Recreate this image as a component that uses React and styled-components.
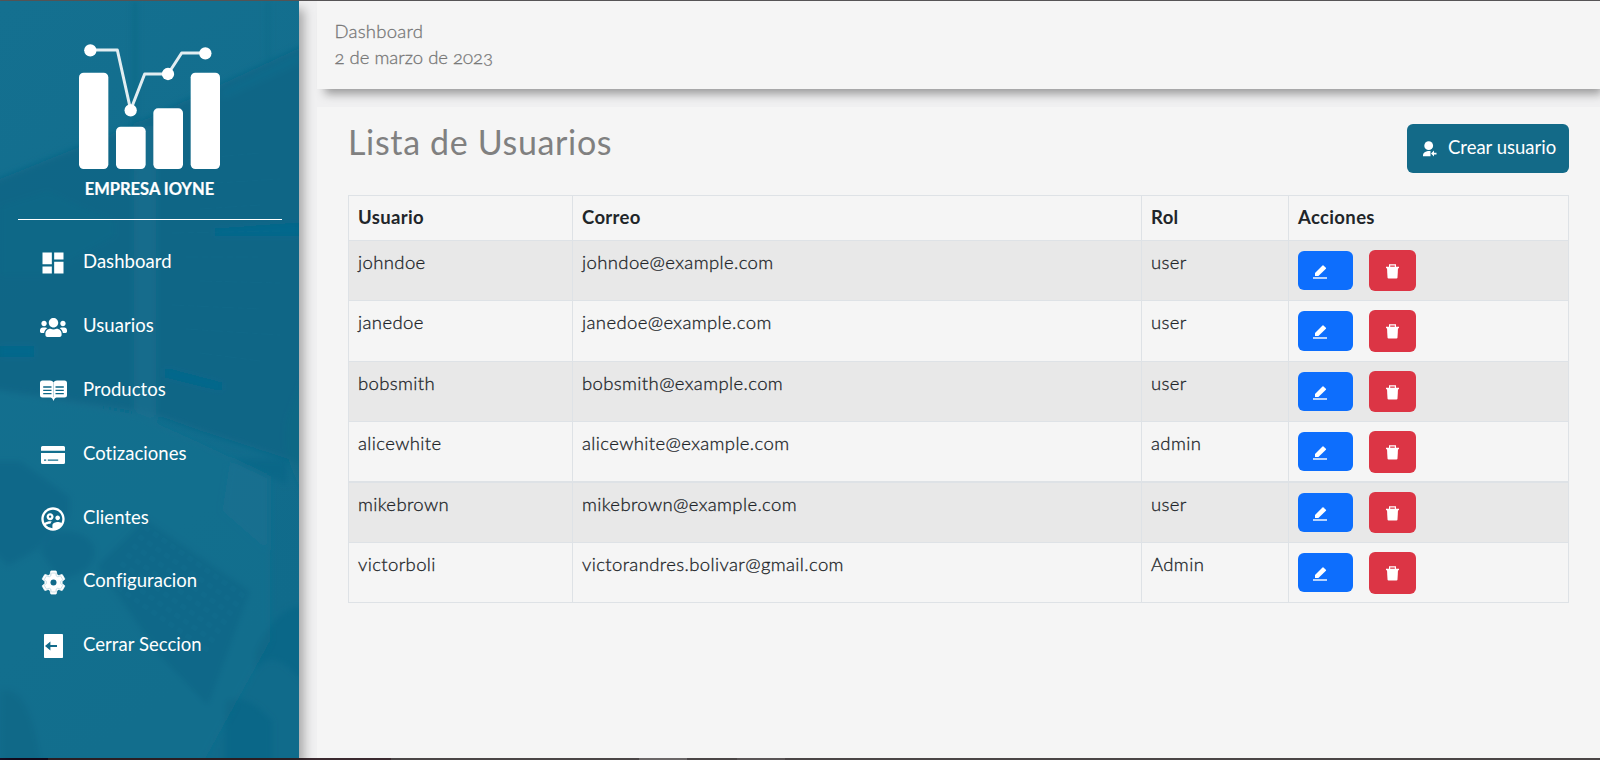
import React from 'react';
import styled, { createGlobalStyle } from 'styled-components';
import { MdDashboard, MdOutlineSupervisedUserCircle } from 'react-icons/md';
import { FaUsers } from 'react-icons/fa';

const GlobalStyle = createGlobalStyle`
  * { box-sizing: border-box; }
  body {
    margin: 0;
    background: #f5f5f5;
    color: #212529;
    font-family: Lato, 'Liberation Sans', sans-serif;
    font-size: 18.5px;
    line-height: 27px;
    overflow: hidden;
  }
`;

const Page = styled.div`
  display: flex;
  width: 1600px;
  height: 757px;
`;
const TopEdge = styled.div`
  height: 1px;
  background: #565456;
`;
const BottomEdge = styled.div`
  height: 2px;
  background: linear-gradient(90deg, #180f26 48px, #3b2a30 48px, #3b2a30 391px, #4a4546 391px,
    #4a4546 639px, #6a6667 639px, #6a6667 687px, #4a4546 687px, #4a4546 737px, #5a5556 737px,
    #5a5556 785px, #4a4546 785px);
`;

const Sidebar = styled.aside`
  position: relative;
  flex: none;
  width: 299px;
  background: #0f6a8a;
  box-shadow: 5px 8px 10px rgba(0, 0, 0, 0.3);
  z-index: 2;
`;
const Backdrop = styled.svg`
  position: absolute;
  inset: 0;
  width: 299px;
  height: 757px;
`;
const SidebarBody = styled.div`
  position: relative;
  padding: 43px 17px 0 18px;
`;
const Brand = styled.div`
  display: flex;
  flex-direction: column;
  align-items: center;
  height: 176px;
  padding-right: 2px;
  border-bottom: 1px solid #fff;
`;
const BrandName = styled.div`
  margin-top: 6px;
  padding-left: 1px;
  color: #fff;
  font-size: 16.5px;
  font-weight: 700;
  -webkit-text-stroke: 0.2px currentColor;
`;
const Nav = styled.nav`
  padding-top: 10px;
`;
const NavItem = styled.a`
  display: flex;
  align-items: center;
  height: 63.8px;
  padding-left: 20.5px;
  color: #fff;
  letter-spacing: 0.05px;
`;
const NavIcon = styled.span`
  display: flex;
  justify-content: center;
  align-items: center;
  width: 29px;
  height: 30px;
  margin: 3px 15.5px 0 0;
`;

const Main = styled.main`
  flex: 1;
  display: flex;
  flex-direction: column;
  gap: 18px;
  padding-left: 18px;
  background: #f0f0f1;
`;
const TopBar = styled.header`
  height: 88px;
  padding: 17px 17.5px;
  background: #f5f5f5;
  color: #777;
  font-weight: 300;
  line-height: 26px;
  box-shadow: 5px 8px 9px -3px rgba(0, 0, 0, 0.36);
`;
const Crumb = styled.div`
  letter-spacing: ${(p) => p.$spacing};
  font-variant-numeric: oldstyle-nums;
  -webkit-text-stroke: 0.3px currentColor;
`;
const Content = styled.section`
  flex: 1;
  padding: 17px 31px 0;
  background: #f5f5f5;
`;
const TitleRow = styled.div`
  display: flex;
  justify-content: space-between;
  height: 71px;
`;
const Title = styled.h1`
  margin: 0;
  color: #808080;
  font-size: 34px;
  font-weight: 400;
  line-height: 36px;
  letter-spacing: 0.65px;
`;
const CreateButton = styled.button`
  display: flex;
  align-items: center;
  width: 162px;
  height: 49px;
  padding: 0 0 2px 16px;
  border: 0;
  border-radius: 6px;
  background: #136a88;
  color: #fff;
  font: inherit;
  svg { margin: 3px 11px 0 0; }
`;

const Table = styled.div`
  border: solid #dee2e6;
  border-width: 1px 0 0 1px;
`;
const Row = styled.div`
  display: grid;
  grid-template-columns: 224px 569px 147px 1fr;
  height: ${(p) => p.$height}px;
  background: ${(p) => (p.$striped ? '#e8e8e8' : '#f5f5f5')};
`;
const Cell = styled.div`
  padding: 8px 9px 0;
  border: solid #dee2e6;
  border-width: 0 1px ${(p) => (p.$thick ? 2 : 1)}px 0;
  font-weight: ${(p) => (p.$head ? 700 : 300)};
  letter-spacing: ${(p) => (p.$head ? 0.35 : 0.38)}px;
  -webkit-text-stroke: ${(p) => (p.$head ? 0 : '0.3px')} currentColor;
`;
const Actions = styled(Cell)`
  display: flex;
  gap: 16px;
  padding-top: 9px;
`;
const EditButton = styled.button`
  display: flex;
  width: 55px;
  height: ${(p) => (p.$tall ? 40 : 39)}px;
  margin-top: 1px;
  padding: 14px 15px;
  border: 0;
  border-radius: 6px;
  background: #0d6efd;
`;
const DeleteButton = styled.button`
  display: flex;
  width: 47px;
  height: ${(p) => (p.$tall ? 42 : 41)}px;
  padding: 14px 17px;
  border: 0;
  border-radius: 6px;
  background: #dc3545;
`;

const Logo = () => (
  <svg width="141" height="126" viewBox="0 0 423 378" fill="#fff">
    <path d="M34 18H115L155 198L197 90H267L308 27H379" fill="none" stroke="#fff" strokeOpacity=".88" strokeWidth="9" strokeLinejoin="round" />
    <circle cx="34" cy="19" r="18.5" />
    <circle cx="155" cy="199" r="18.5" />
    <circle cx="267" cy="90" r="18.5" />
    <circle cx="379" cy="28" r="18.5" />
    <rect x="0" y="86" width="88" height="289" rx="14" />
    <rect x="111" y="248" width="89" height="127" rx="14" />
    <rect x="223" y="193" width="89" height="182" rx="14" />
    <rect x="335" y="86" width="88" height="289" rx="14" />
  </svg>
);

const BookIcon = () => (
  <svg width="27" height="21" viewBox="0 0 27 21">
    <path d="M2.500 .5H10Q12.600 .6 13.500 2.500Q14.400 .6 17 .5H24.500Q27 .5 27 3V15Q27 17.500 24.500 17.500H16.500Q15 17.600 14.400 19L13.500 21L12.600 19Q12 17.600 10.500 17.500H2.500Q0 17.500 0 15V3Q0 .5 2.500 .5Z" fill="#fff" />
    <path d="M3.200 7H11.500M3.200 10.300H11.500M3.200 13.600H11.500M15.500 7H23.800M15.500 10.300H23.800M15.500 13.600H23.800" stroke="#0c6787" strokeWidth="1.300" />
    <path d="M13.500 2.500V17" stroke="#8fb9ca" strokeWidth=".6" />
  </svg>
);
const CardIcon = () => (
  <svg width="24" height="18" viewBox="0 0 24 18" fill="#fff">
    <path d="M1.5 0h21A1.5 1.5 0 0 1 24 1.5V4.8H0V1.5A1.5 1.5 0 0 1 1.5 0Z" />
    <path fillRule="evenodd" d="M0 7h24v9.5a1.5 1.5 0 0 1-1.500 1.500h-21A1.500 1.500 0 0 1 0 16.500ZM3 13.500v1.300h2.200v-1.300ZM6.800 13.500v1.300H17.200v-1.300Z" />
  </svg>
);
const gearOutline =
  'M19.14 12.94c.04-.3.06-.61.06-.94 0-.32-.02-.64-.07-.94l2.030-1.580c.18-.14.23-.41.12-.61l-1.920-3.320c-.12-.22-.37-.29-.59-.22l-2.390.96c-.5-.38-1.030-.7-1.620-.94l-.36-2.540c-.04-.24-.24-.41-.48-.41h-3.840c-.24 0-.43.17-.47.41l-.36 2.540c-.59.24-1.130.57-1.620.94l-2.390-.96c-.22-.08-.47 0-.59.22L2.740 8.870c-.12.21-.08.47.12.61l2.030 1.580c-.05.3-.09.63-.09.94s.02.64.07.94l-2.030 1.580c-.18.14-.23.41-.12.61l1.920 3.320c.12.22.37.29.59.22l2.390-.96c.5.38 1.030.7 1.620.94l.36 2.540c.05.24.24.41.48.41h3.840c.24 0 .44-.17.47-.41l.36-2.540c.59-.24 1.130-.56 1.620-.94l2.390.96c.22.08.47 0 .59-.22l1.920-3.320c.12-.22.07-.47-.12-.61l-2.010-1.580Z';
const GearIcon = () => (
  <svg width="29" height="29" viewBox="0 0 24 24">
    <path d={gearOutline} fill="#fff" stroke="#fff" strokeWidth=".6" strokeLinejoin="round" />
    <path d={gearOutline} fill="none" stroke="#a5c8d5" strokeWidth="0.6" transform="translate(2.200 2.200) scale(.817)" />
    <circle cx="12" cy="12" r="4.200" fill="#fff" />
    <circle cx="12" cy="12" r="2.500" fill="#116a8a" />
  </svg>
);
const ExitIcon = () => (
  <svg width="19" height="24" viewBox="0 0 19 24">
    <rect width="19" height="24" rx="0.8" fill="#fff" />
    <path d="M1 12L6.400 7.600V11H13V13H6.400V16.400Z" fill="#116a8a" />
  </svg>
);
const UserAddIcon = () => (
  <svg width="14" height="16" viewBox="0 0 14 16" fill="#fff">
    <circle cx="5.700" cy="4.700" r="4.400" />
    <path d="M0 15.200V13.600C.4 11.600 2.500 10.300 5 10H7.500V15.200Z" />
    <path d="M8 12.600L11 9.600V11.800H13.500V13.400H11V15.600Z" />
  </svg>
);
const PencilIcon = () => (
  <svg width="14" height="14" viewBox="0 0 14 14" fill="#fff">
    <path d="M2 11V7.900L9.500.4Q10 0 10.500.4L12.900 2.700Q13.300 3.200 12.900 3.700L5.400 11Z" />
    <path d="M0 12.300H14V13.700H0Z" />
  </svg>
);
const TrashIcon = () => (
  <svg width="13" height="15" viewBox="0 0 13 15" fill="#fff">
    <path fillRule="evenodd" d="M3 .3H10V2.700H13V4.200H0V2.700H3ZM4.200 1.500V2.700H8.800V1.500Z" />
    <path d="M1 4H12L11.500 13.500Q11.400 14.600 10.500 14.600H2.500Q1.600 14.600 1.500 13.500Z" />
  </svg>
);

const keys = [];
for (let r = 0; r < 7; r += 1) {
  for (let c = 0; c < 12; c += 1) keys.push([r, c]);
}

const OfficeBackdrop = () => (
  <Backdrop viewBox="0 0 299 757" preserveAspectRatio="none">
    <defs>
      <linearGradient id="wall" x1="0" y1="0" x2="0.300" y2="1">
        <stop offset="0" stopColor="#147090" />
        <stop offset="1" stopColor="#106b8b" />
      </linearGradient>
      <filter id="soft" x="-10%" y="-10%" width="120%" height="120%">
        <feGaussianBlur stdDeviation="3" />
      </filter>
    </defs>
    <rect width="299" height="757" fill="url(#wall)" />
    <g filter="url(#soft)">
      <path d="M-9 181L130 125L309 42V465L200 430L150 412L-9 388Z" fill="#086485" opacity=".85" />
      <path d="M0 205L48 190L80 205L115 220V235L70 260L45 275H0Z" fill="#126a89" opacity=".6" />
      <path d="M133 0H137V170H133ZM267 0H269V60H267Z" fill="#08617f" opacity=".5" />
      <path d="M134 125H156V420L134 412Z" fill="#1a7191" opacity=".6" />
      <path d="M222 90L299 52V62L222 98Z" fill="#1a7090" opacity=".45" />
      <path d="M0 345H34V356H0ZM215 228L299 222V235H215ZM165 367L222 382V390L165 376Z" fill="#046d95" opacity=".45" />
      <path d="M288 415Q278 455 309 500V360Z" fill="#166b86" opacity=".6" />
      <path d="M-9 388L140 415L200 442L270 475V640L200 767H-9Z" fill="#137090" opacity=".6" />
      <path d="M-9 460H20L70 496L70 515L35 550L8 565L-9 548Z" fill="#0a6585" opacity=".6" />
      <path d="M40 550Q55 520 85 535Q105 550 85 570L60 580Z" fill="#0a6585" opacity=".6" />
      <path d="M145 518L250 590L208 705L160 655L97 565Z" fill="#0a6686" opacity=".65" />
      <path d="M230 458L268 476V550L222 510Z" fill="#17718f" opacity=".5" />
      <path d="M232 458H287V484ZM255 650Q280 600 309 605V690Q275 640 255 670ZM225 700Q245 690 272 720V767H225ZM0 690Q30 680 42 767H0Z" fill="#076183" opacity=".4" />
    </g>
    <g fill="#14708f" opacity=".35">
      {keys.map(([r, c]) => (
        <rect key={`${r}-${c}`} x={146 + c * 8.600 - r * 6} y={524 + c * 6 + r * 9} width="6" height="5" rx="1" transform={`rotate(34 ${146 + c * 8.600 - r * 6} ${524 + c * 6 + r * 9})`} />
      ))}
    </g>
    <g stroke="#146e8e" strokeWidth="1" strokeDasharray="12 4 6 3" opacity=".3">
      {[0, 1, 2, 3, 4, 5, 6, 7, 8].map((n) => (
        <path key={n} d={`M${172 + (n % 3) * 14} ${160 + n * 24}L${260 + (n % 2) * 20} ${152 + n * 26}`} />
      ))}
    </g>
  </Backdrop>
);

const menu = [
  ['Dashboard', <MdDashboard size={28} />],
  ['Usuarios', <FaUsers size={27} />],
  ['Productos', <BookIcon />],
  ['Cotizaciones', <CardIcon />],
  ['Clientes', <MdOutlineSupervisedUserCircle size={28} />],
  ['Configuracion', <GearIcon />],
  ['Cerrar Seccion', <ExitIcon />],
];

const users = [
  ['johndoe', 'johndoe@example.com', 'user', 60],
  ['janedoe', 'janedoe@example.com', 'user', 61],
  ['bobsmith', 'bobsmith@example.com', 'user', 60],
  ['alicewhite', 'alicewhite@example.com', 'admin', 61],
  ['mikebrown', 'mikebrown@example.com', 'user', 60],
  ['victorboli', 'victorandres.bolivar@gmail.com', 'Admin', 60],
];

export default function App() {
  return (
    <>
      <GlobalStyle />
      <TopEdge />
      <Page>
        <Sidebar>
          <OfficeBackdrop />
          <SidebarBody>
            <Brand>
              <Logo />
              <BrandName>EMPRESA IOYNE</BrandName>
            </Brand>
            <Nav>
              {menu.map(([label, icon]) => (
                <NavItem key={label}>
                  <NavIcon>{icon}</NavIcon>
                  {label}
                </NavItem>
              ))}
            </Nav>
          </SidebarBody>
        </Sidebar>
        <Main>
          <TopBar>
            <Crumb $spacing="0.25px">Dashboard</Crumb>
            <Crumb $spacing="0">2 de marzo de 2023</Crumb>
          </TopBar>
          <Content>
            <TitleRow>
              <Title>Lista de Usuarios</Title>
              <CreateButton>
                <UserAddIcon />
                Crear usuario
              </CreateButton>
            </TitleRow>
            <Table>
              <Row $height={45}>
                {['Usuario', 'Correo', 'Rol', 'Acciones'].map((h) => (
                  <Cell key={h} $head>{h}</Cell>
                ))}
              </Row>
              {users.map(([name, mail, role, height], i) => (
                <Row key={name} $height={height} $striped={i % 2 === 0}>
                  <Cell $thick={i === 3}>{name}</Cell>
                  <Cell $thick={i === 3}>{mail}</Cell>
                  <Cell $thick={i === 3}>{role}</Cell>
                  <Actions $thick={i === 3}>
                    <EditButton $tall={i === 1}><PencilIcon /></EditButton>
                    <DeleteButton $tall={i % 2 === 1}><TrashIcon /></DeleteButton>
                  </Actions>
                </Row>
              ))}
            </Table>
          </Content>
        </Main>
      </Page>
      <BottomEdge />
    </>
  );
}
